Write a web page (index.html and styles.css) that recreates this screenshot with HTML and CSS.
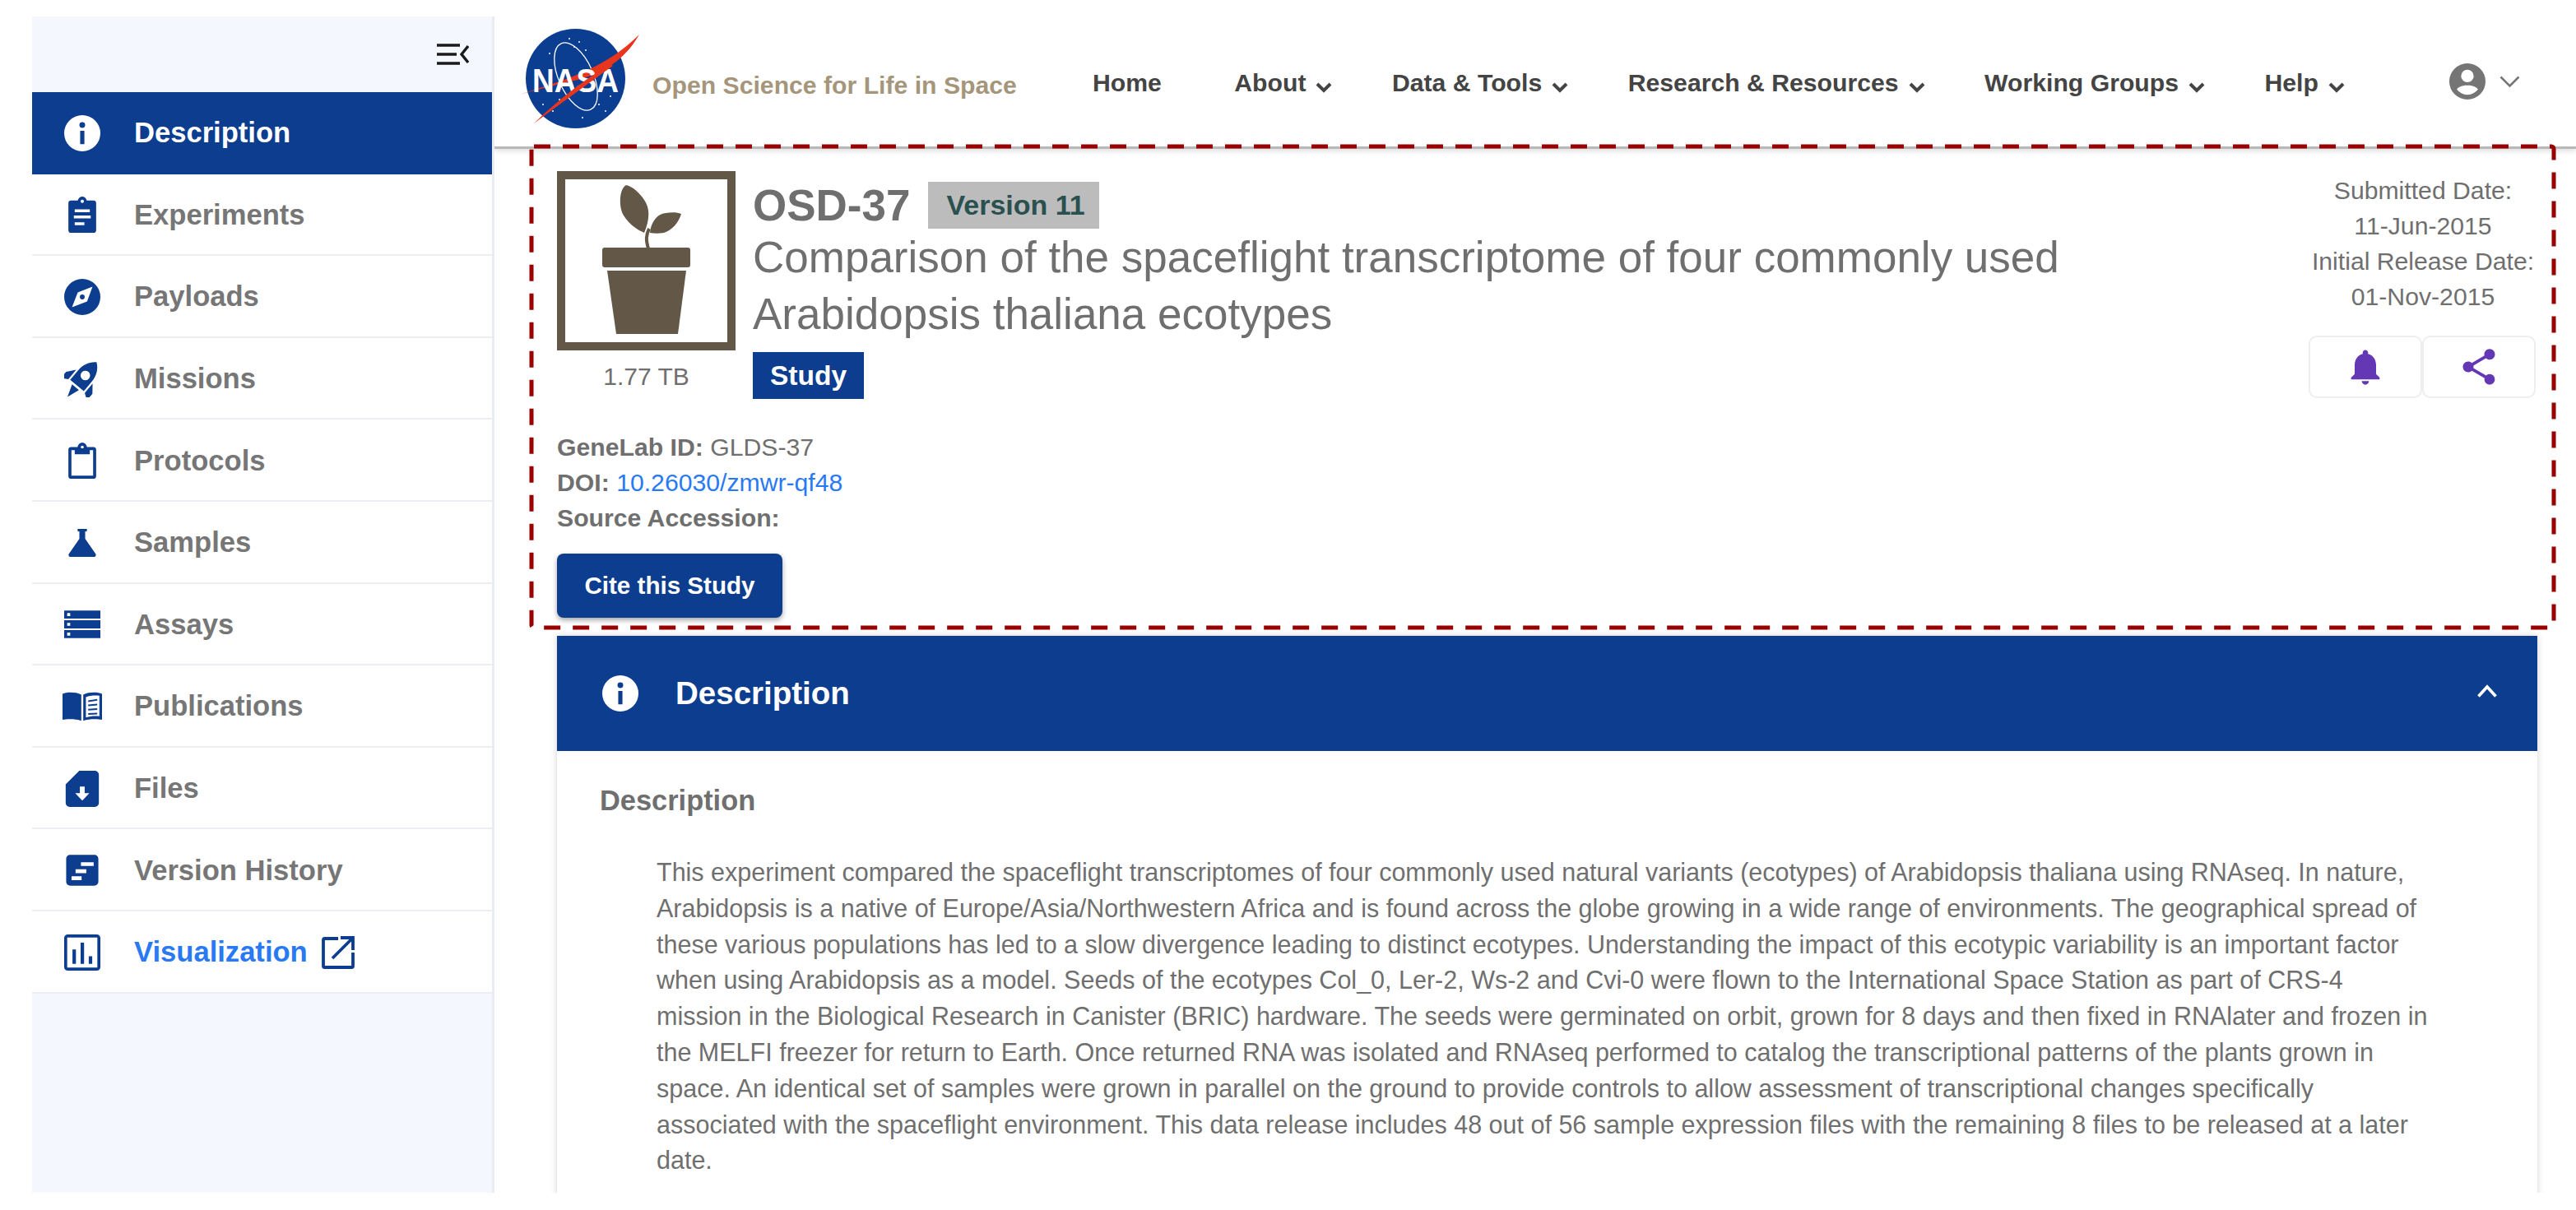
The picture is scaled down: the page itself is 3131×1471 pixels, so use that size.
FILE: index.html
```html
<!DOCTYPE html>
<html lang="en">

<head>
    <meta charset="UTF-8">
    <meta name="viewport" content="width=device-width, initial-scale=1.0">
    <title>OSD-37 - Open Science for Life in Space</title>
    <link rel="stylesheet" href="styles.css">
</head>

<body>
    <aside class="sidebar">
        <div class="sidebar-top">
            <svg class="toggle-icon" viewBox="0 0 39 26"><path d="M0 2h28M0 13h24M0 24h28M38 3l-8 10 8 10" fill="none" stroke="#1a1a1a" stroke-width="3.4"/></svg>
        </div>
        <ul class="side-list">
            <li class="side-item active">
                <svg class="side-icon" viewBox="0 0 24 24"><path fill-rule="evenodd" d="M12 0a12 12 0 1 0 0 24 12 12 0 0 0 0-24zM12 4.6a1.9 1.9 0 1 1 0 3.8 1.9 1.9 0 0 1 0-3.8zM10.6 10.4h2.8v8.8h-2.8z"/></svg>
                <span>Description</span>
            </li>
            <li class="side-item">
                <svg class="side-icon" viewBox="0 0 24 24"><path fill-rule="evenodd" d="M4.5 2.6H9C9.5 1 10.6 0 12 0s2.5 1 3 2.6h4.500c1 0 1.700.7 1.700 1.700v18c0 1-.7 1.700-1.700 1.700h-15c-1 0-1.700-.7-1.700-1.700v-18c0-1 .7-1.700 1.700-1.700zM12 2a1.100 1.100 0 1 0 0 2.200A1.100 1.100 0 0 0 12 2zM7 8.400v1.900h10V8.400zM6.400 12.600v1.900h11.200v-1.900zM7 17v1.900h6.400V17z"/></svg>
                <span>Experiments</span>
            </li>
            <li class="side-item">
                <svg class="side-icon" viewBox="0 0 24 24"><path fill-rule="evenodd" d="M12 0a12 12 0 1 0 0 24 12 12 0 0 0 0-24zM18.800 5.200L15.200 15 5.200 18.800 9 9zM12 10.400a1.600 1.600 0 1 0 0 3.200 1.600 1.600 0 0 0 0-3.200z"/></svg>
                <span>Payloads</span>
            </li>
            <li class="side-item">
                <svg class="side-icon" viewBox="1 1 22 22"><g transform="rotate(40 12 12)"><path fill-rule="evenodd" d="M12-1.500C15.600 1 17.400 5 17.400 9.500V17H6.600V9.500C6.600 5 8.400 1 12-1.500zM12 6.200a2.900 2.900 0 1 0 0 5.800 2.900 2.900 0 0 0 0-5.800z"/><path d="M5.500 10L1.600 14.800V20L5.500 17.400zM18.500 10L22.400 14.800V20L18.500 17.400zM9.300 18.400H14.700L12 26z"/></g></svg>
                <span>Missions</span>
            </li>
            <li class="side-item">
                <svg class="side-icon" viewBox="0 0 24 24"><path fill-rule="evenodd" d="M4.500 3H8.800C9.300 1.200 10.500 0 12 0s2.700 1.200 3.200 3h4.300c1 0 1.700.7 1.700 1.700v17.600c0 1-.7 1.700-1.700 1.700h-15c-1 0-1.700-.7-1.700-1.700V4.700C2.800 3.700 3.500 3 4.500 3zM4.800 5v17h14.400V5h-2.200v2.800H7V5zM12 2a1 1 0 1 0 0 2 1 1 0 0 0 0-2z"/></svg>
                <span>Protocols</span>
            </li>
            <li class="side-item">
                <svg class="side-icon" viewBox="-3.600 -3.600 31.200 31.200"><path d="M8 0h8v2h-1.500v6.500L23.600 21.500c.6 1-.1 2.500-1.300 2.500H1.700C.5 24-.2 22.500.4 21.500L9.500 8.500V2H8z"/></svg>
                <span>Samples</span>
            </li>
            <li class="side-item">
                <svg class="side-icon" viewBox="0 0 24 24"><path fill-rule="evenodd" d="M0 2.800h24v5.400H0zM2 4.500v2h2v-2zM0 9.300h24v5.400H0zM2 11v2h2v-2zM0 15.800h24v5.400H0zM2 17.500v2h2v-2z"/></svg>
                <span>Assays</span>
            </li>
            <li class="side-item">
                <svg class="side-icon side-icon-wide" viewBox="0 0 24 18"><path fill-rule="evenodd" d="M0 1.200C2.600.1 8 0 11.400 1.700V17.600C8 16.400 3 16.400 0 17V1.200zM12.600 1.700C16 0 21.400.1 24 1.200V17c-3-.6-8-.6-11.400.6zM14.200 3.200v12.400c2.600-.9 5.900-1 8.200-.7V2.400c-2.700-.3-5.800-.1-8.200.8zM15.600 5.200l5.500-.8v1l-5.500.8zM15.600 7.800l5.500-.6v1l-5.500.6zM15.600 10.400l5.500-.4v1l-5.500.4zM15.600 13l5.500-.2v1l-5.500.2z"/></svg>
                <span>Publications</span>
            </li>
            <li class="side-item">
                <svg class="side-icon" viewBox="0 0 24 24"><path fill-rule="evenodd" d="M10 0h10.300C21.800 0 23 1.200 23 2.700v18.600c0 1.500-1.200 2.700-2.700 2.700H3.700C2.200 24 1 22.800 1 21.300V9zM10.400 10.500v4.300H7.300L12 19.800l4.700-5H13.600v-4.300z"/></svg>
                <span>Files</span>
            </li>
            <li class="side-item">
                <svg class="side-icon" viewBox="-1.500 -1 27 26"><path fill-rule="evenodd" d="M3 .5h18c1.700 0 3 1.300 3 3v17c0 1.700-1.300 3-3 3H3c-1.700 0-3-1.300-3-3v-17c0-1.700 1.300-3 3-3zM11 6v2.800h9.500V6zM7 11.300v2.800h8v-2.800zM4 16.500v2.800h7.500v-2.800z"/></svg>
                <span>Version History</span>
            </li>
            <li class="side-item viz">
                <svg class="side-icon" viewBox="0 0 24 24"><path fill-rule="evenodd" d="M2.500 0h19C23 0 24 1 24 2.500v19c0 1.500-1 2.500-2.500 2.500h-19C1 24 0 23 0 21.500v-19C0 1 1 0 2.500 0zM2 2v20h20V2zM5.500 10h2.300v9.500H5.500zM10.900 5.500h2.300v14h-2.300zM16.300 14.500h2.300v5h-2.300z"/></svg>
                <span>Visualization</span>
                <svg class="ext-icon" viewBox="0 0 40 40"><path d="M20 3H3.500C2.500 3 2 3.500 2 4.500v32c0 1 .5 1.500 1.500 1.500h33c1 0 1.500-.5 1.500-1.500V20M37 3L13 27M23 2h15v15" fill="none" stroke="#0d3d8f" stroke-width="3.800"/></svg>
            </li>
        </ul>
    </aside>

    <main class="content">
        <header class="topbar">
            <svg class="nasa-logo" viewBox="0 0 145 122">
                <circle cx="67.500" cy="60.500" r="60.500" fill="#0b3d91"/>
                <ellipse cx="68" cy="58" rx="21" ry="44" transform="rotate(-24 68 58)" fill="none" stroke="#fff" stroke-width="1.300"/>
                <g fill="#fff">
                    <circle cx="60" cy="12" r="1"/><circle cx="72" cy="16" r="1"/><circle cx="80" cy="26" r="1"/><circle cx="66" cy="22" r="1"/>
                    <circle cx="28" cy="92" r="1"/><circle cx="40" cy="100" r="1"/><circle cx="48" cy="86" r="1"/><circle cx="96" cy="92" r="1"/>
                    <circle cx="110" cy="82" r="1"/><circle cx="104" cy="100" r="1"/><circle cx="36" cy="30" r="1"/><circle cx="76" cy="108" r="1"/>
                </g>
                <path d="M0 80C45 64 100 52 145 7C126 40 100 54 70 62C44 68 20 74 0 80Z" fill="#e8351e"/>
                <text class="nasa-text" x="15" y="77" textLength="105" lengthAdjust="spacingAndGlyphs">NASA</text>
                <path d="M17 115C45 88 80 60 110 43L113 45C84 66 48 92 17 115Z" fill="#e8351e"/>
            </svg>
            <span class="tagline">Open Science for Life in Space</span>
            <nav class="main-nav">
                <a class="nav-link nav-home">Home</a>
                <a class="nav-link">About<svg class="nav-caret" viewBox="0 0 20 14"><path d="M2 3l8 8 8-8" fill="none" stroke="#444" stroke-width="4"/></svg></a>
                <a class="nav-link">Data &amp; Tools<svg class="nav-caret" viewBox="0 0 20 14"><path d="M2 3l8 8 8-8" fill="none" stroke="#444" stroke-width="4"/></svg></a>
                <a class="nav-link">Research &amp; Resources<svg class="nav-caret" viewBox="0 0 20 14"><path d="M2 3l8 8 8-8" fill="none" stroke="#444" stroke-width="4"/></svg></a>
                <a class="nav-link">Working Groups<svg class="nav-caret" viewBox="0 0 20 14"><path d="M2 3l8 8 8-8" fill="none" stroke="#444" stroke-width="4"/></svg></a>
                <a class="nav-link">Help<svg class="nav-caret" viewBox="0 0 20 14"><path d="M2 3l8 8 8-8" fill="none" stroke="#444" stroke-width="4"/></svg></a>
            </nav>
            <div class="user-menu">
                <svg class="user-icon" viewBox="0 0 24 24"><path fill-rule="evenodd" d="M12 0a12 12 0 1 0 0 24 12 12 0 0 0 0-24zM12 4.200a4.200 4.200 0 1 1 0 8.400 4.200 4.200 0 0 1 0-8.400zM12 14.600c3.200 0 6 1 7 2.600-1.600 2.200-4.100 3.600-7 3.600s-5.400-1.400-7-3.600c1-1.600 3.800-2.600 7-2.600z"/></svg>
                <svg class="user-caret" viewBox="0 0 25 15"><path d="M1.500 1.500l11 11 11-11" fill="none" stroke="#757575" stroke-width="2.600"/></svg>
            </div>
        </header>

        <section class="study-head">
            <div class="study-top">
                <div class="study-thumb">
                    <div class="thumb-box">
                        <svg viewBox="0 0 197 198">
                            <path d="M74 7C65 12 65 35 71 44C77 54 88 62 96 65C103 48 103 35 96 25C90 16 82 9 74 7Z"/>
                            <path d="M103 65C104 52 112 42 122 41C130 40 136 40 141 42C138 52 130 62 120 65C114 66 108 66 103 65Z"/>
                            <path d="M101 84C98 74 98 68 102 60" fill="none" stroke="#635848" stroke-width="4"/>
                            <rect x="45" y="83" width="107" height="24" rx="3"/>
                            <path d="M51 111H147L137 188H62Z"/>
                        </svg>
                    </div>
                    <div class="thumb-size">1.77 TB</div>
                </div>
                <div class="study-title">
                    <div class="study-id-row">
                        <h1>OSD-37</h1>
                        <span class="version-badge">Version 11</span>
                    </div>
                    <h2>Comparison of the spaceflight transcriptome of four commonly used Arabidopsis thaliana ecotypes</h2>
                    <span class="type-badge">Study</span>
                </div>
                <div class="study-dates">
                    <div>Submitted Date:</div>
                    <div>11-Jun-2015</div>
                    <div>Initial Release Date:</div>
                    <div>01-Nov-2015</div>
                    <div class="date-actions">
                        <button class="icon-btn" type="button"><svg viewBox="0 0 24 24"><path d="M12 22c1.100 0 2-.9 2-2h-4c0 1.100.9 2 2 2zm6-6v-5c0-3.070-1.630-5.640-4.500-6.320V4c0-.83-.67-1.500-1.500-1.500s-1.500.67-1.500 1.500v.68C7.640 5.360 6 7.920 6 11v5l-2 2v1h16v-1l-2-2z"/></svg></button>
                        <button class="icon-btn" type="button"><svg viewBox="0 0 24 24"><path d="M18 16.080c-.76 0-1.440.3-1.960.77L8.910 12.700c.05-.23.09-.46.09-.7s-.04-.47-.09-.7l7.050-4.110c.54.5 1.250.81 2.040.81 1.660 0 3-1.340 3-3s-1.340-3-3-3-3 1.340-3 3c0 .24.04.47.09.7L8.040 9.810C7.500 9.310 6.790 9 6 9c-1.660 0-3 1.340-3 3s1.340 3 3 3c.79 0 1.500-.31 2.040-.81l7.120 4.160c-.05.21-.08.43-.08.65 0 1.610 1.310 2.920 2.920 2.920 1.610 0 2.920-1.310 2.920-2.920s-1.310-2.920-2.920-2.920z"/></svg></button>
                    </div>
                </div>
            </div>
            <div class="study-meta">
                <div><b>GeneLab ID:</b> GLDS-37</div>
                <div><b>DOI:</b> <a class="doi-link">10.26030/zmwr-qf48</a></div>
                <div><b>Source Accession:</b></div>
            </div>
            <button class="cite-btn" type="button">Cite this Study</button>
        </section>

        <section class="card">
            <div class="card-header">
                <svg class="card-icon" viewBox="0 0 24 24"><path fill-rule="evenodd" d="M12 0a12 12 0 1 0 0 24 12 12 0 0 0 0-24zM12 4.600a1.900 1.900 0 1 1 0 3.800 1.900 1.900 0 0 1 0-3.800zM10.600 10.400h2.800v8.800h-2.800z"/></svg>
                <span class="card-title">Description</span>
                <svg class="card-caret" viewBox="0 0 24 16"><path d="M1.500 14.500L12 3l10.500 11.500" fill="none" stroke="#fff" stroke-width="3.600"/></svg>
            </div>
            <div class="card-body">
                <h3>Description</h3>
                <p>This experiment compared the spaceflight transcriptomes of four commonly used natural variants (ecotypes) of Arabidopsis thaliana using RNAseq. In nature,<br>
                Arabidopsis is a native of Europe/Asia/Northwestern Africa and is found across the globe growing in a wide range of environments. The geographical spread of<br>
                these various populations has led to a slow divergence leading to distinct ecotypes. Understanding the impact of this ecotypic variability is an important factor<br>
                when using Arabidopsis as a model. Seeds of the ecotypes Col_0, Ler-2, Ws-2 and Cvi-0 were flown to the International Space Station as part of CRS-4<br>
                mission in the Biological Research in Canister (BRIC) hardware. The seeds were germinated on orbit, grown for 8 days and then fixed in RNAlater and frozen in<br>
                the MELFI freezer for return to Earth. Once returned RNA was isolated and RNAseq performed to catalog the transcriptional patterns of the plants grown in<br>
                space. An identical set of samples were grown in parallel on the ground to provide controls to allow assessment of transcriptional changes specifically<br>
                associated with the spaceflight environment. This data release includes 48 out of 56 sample expression files with the remaining 8 files to be released at a later<br>
                date.</p>
            </div>
        </section>
    </main>

    <!-- red dashed callout drawn over the study header -->
    <svg class="callout" viewBox="0 0 2468 595"><rect x="5" y="5" width="2458" height="585" rx="3" fill="none" stroke="#990000" stroke-width="5" stroke-dasharray="20 15"/></svg>
</body>

</html>
```

FILE: styles.css
```css
* {
    box-sizing: border-box;
}

body {
    font-family: "Liberation Sans", Arial, sans-serif;
    font-size: 30.2px;
    color: #6f6f6f;
    background-color: #fff;
    margin: 0;
    padding: 20px 0 21px 39px;
    height: 1471px;
    display: flex;
    overflow: hidden;
    position: relative;
}

/* left menu */
.sidebar {
    width: 562px;
    flex-shrink: 0;
    background-color: #f4f7fd;
    border-right: 3px solid #e9ecf3;
}

.sidebar-top {
    height: 92px;
    display: flex;
    align-items: center;
    justify-content: flex-end;
    padding-right: 28px;
}

.toggle-icon {
    width: 39px;
    height: 26px;
}

.side-list {
    list-style: none;
    margin: 0;
    padding: 0;
}

.side-item {
    height: 99.6px;
    display: flex;
    align-items: center;
    padding: 2px 0 0 39px;
    background-color: #fff;
    border-bottom: 2px solid #eceef3;
    font-size: 34.6px;
    font-weight: bold;
    color: #767676;
}

.side-item.active {
    padding-top: 0;
    background-color: #0d3d8f;
    color: #fff;
    border-bottom: none;
}

.side-icon {
    width: 44px;
    height: 44px;
    margin-right: 41px;
    flex-shrink: 0;
    fill: #0d3d8f;
}

.side-icon-wide {
    width: 48px;
    height: 36px;
    margin-left: -2px;
    margin-right: 39px;
}

.active .side-icon {
    fill: #fff;
}

.viz {
    color: #2979f5;
}

.ext-icon {
    width: 40px;
    height: 40px;
    margin-left: 17px;
}

/* top navigation */
.content {
    flex: 1;
    min-width: 0;
    overflow: hidden;
}

.topbar {
    height: 161px;
    display: flex;
    align-items: center;
    padding: 0 68px 0 31px;
    border-bottom: 3px solid #b8b8b8;
    box-shadow: 0 3px 6px rgba(0, 0, 0, 0.12);
}

.nasa-logo {
    width: 145px;
    height: 122px;
    margin-top: -6px;
    flex-shrink: 0;
}

.nasa-text {
    font-size: 40px;
    font-weight: bold;
    fill: #fff;
}

.tagline {
    margin-left: 16px;
    margin-top: 10px;
    font-size: 30.2px;
    font-weight: bold;
    color: #a5967b;
    white-space: nowrap;
}

.main-nav {
    display: flex;
    align-items: center;
    gap: 72.5px;
    margin-left: 92px;
    margin-top: 4px;
}

.nav-link {
    display: flex;
    align-items: center;
    font-size: 30.2px;
    font-weight: bold;
    color: #444;
    white-space: nowrap;
}

.nav-home {
    margin-right: 16px;
}

.nav-caret {
    width: 20px;
    height: 14px;
    margin-left: 12px;
    margin-top: 10px;
}

.user-menu {
    margin-left: auto;
    display: flex;
    align-items: center;
    gap: 17px;
}

.user-icon {
    width: 44px;
    height: 44px;
    fill: #757575;
}

.user-caret {
    width: 25px;
    height: 15px;
}

/* study header */
.study-head {
    padding: 27px 47px 0 76px;
}

.study-top {
    display: flex;
}

.study-thumb {
    width: 217px;
    flex-shrink: 0;
    text-align: center;
}

.thumb-box {
    height: 218px;
    border: 10px solid #635848;
}

.thumb-box svg {
    display: block;
    width: 100%;
    height: 100%;
    fill: #635848;
}

.thumb-size {
    margin-top: 10px;
    line-height: 44px;
    font-size: 30px;
}

.study-title {
    flex: 1;
    margin-left: 21px;
    padding-top: 13px;
}

.study-id-row {
    display: flex;
    align-items: center;
    gap: 22px;
}

.study-id-row h1 {
    margin: 0;
    font-size: 53px;
    line-height: 57px;
    color: #6f6f6f;
}

.version-badge {
    height: 57px;
    padding: 0 17px 0 22px;
    display: flex;
    align-items: center;
    background-color: #bcbcbc;
    color: #2a5050;
    font-size: 34px;
    font-weight: bold;
}

.study-title h2 {
    margin: 0 0 12px;
    max-width: 1700px;
    font-size: 53px;
    line-height: 69px;
    font-weight: normal;
    color: #6f6f6f;
}

.type-badge {
    display: inline-block;
    height: 57px;
    line-height: 57px;
    padding: 0 21px;
    background-color: #0d3d8f;
    color: #fff;
    font-size: 33.500px;
    font-weight: bold;
}

.study-dates {
    width: 278px;
    flex-shrink: 0;
    padding-top: 2px;
    text-align: center;
    line-height: 43px;
}

.date-actions {
    display: flex;
    margin-top: 26px;
}

.icon-btn {
    width: 138px;
    height: 76px;
    padding: 0;
    display: flex;
    align-items: center;
    justify-content: center;
    background-color: #fff;
    border: 2px solid #eeeeee;
    border-radius: 10px;
}

.icon-btn svg {
    width: 52px;
    height: 52px;
    fill: #6438b4;
}

.study-meta {
    margin-top: 37px;
    line-height: 43px;
}

.doi-link {
    color: #2979f5;
}

.cite-btn {
    display: block;
    width: 274px;
    height: 78px;
    margin-top: 22px;
    padding: 0;
    background-color: #0d3d8f;
    color: #fff;
    border: none;
    border-radius: 8px;
    font-family: inherit;
    font-size: 29.600px;
    font-weight: bold;
    box-shadow: 0 3px 6px rgba(0, 0, 0, 0.35);
}

/* description card */
.card {
    height: 700px;
    margin: 22px 47px 0 76px;
    box-shadow: 0 0 8px rgba(0, 0, 0, 0.18);
}

.card-header {
    height: 140px;
    display: flex;
    align-items: center;
    padding: 0 49px 0 55px;
    background-color: #0d3d8f;
    color: #fff;
}

.card-icon {
    width: 44px;
    height: 44px;
    fill: #fff;
}

.card-title {
    margin-left: 45px;
    font-size: 38.500px;
    font-weight: bold;
}

.card-caret {
    width: 24px;
    height: 16px;
    margin-left: auto;
    margin-top: -6px;
}

.card-body {
    padding: 38px 52px 0;
}

.card-body h3 {
    margin: 0;
    font-size: 34.400px;
    line-height: 44px;
    color: #6f6f6f;
}

.card-body p {
    margin: 44px 0 0 69px;
    font-size: 30.5px;
    line-height: 43.800px;
}

.callout {
    position: absolute;
    left: 641px;
    top: 173px;
    width: 2468px;
    height: 595px;
}
```
